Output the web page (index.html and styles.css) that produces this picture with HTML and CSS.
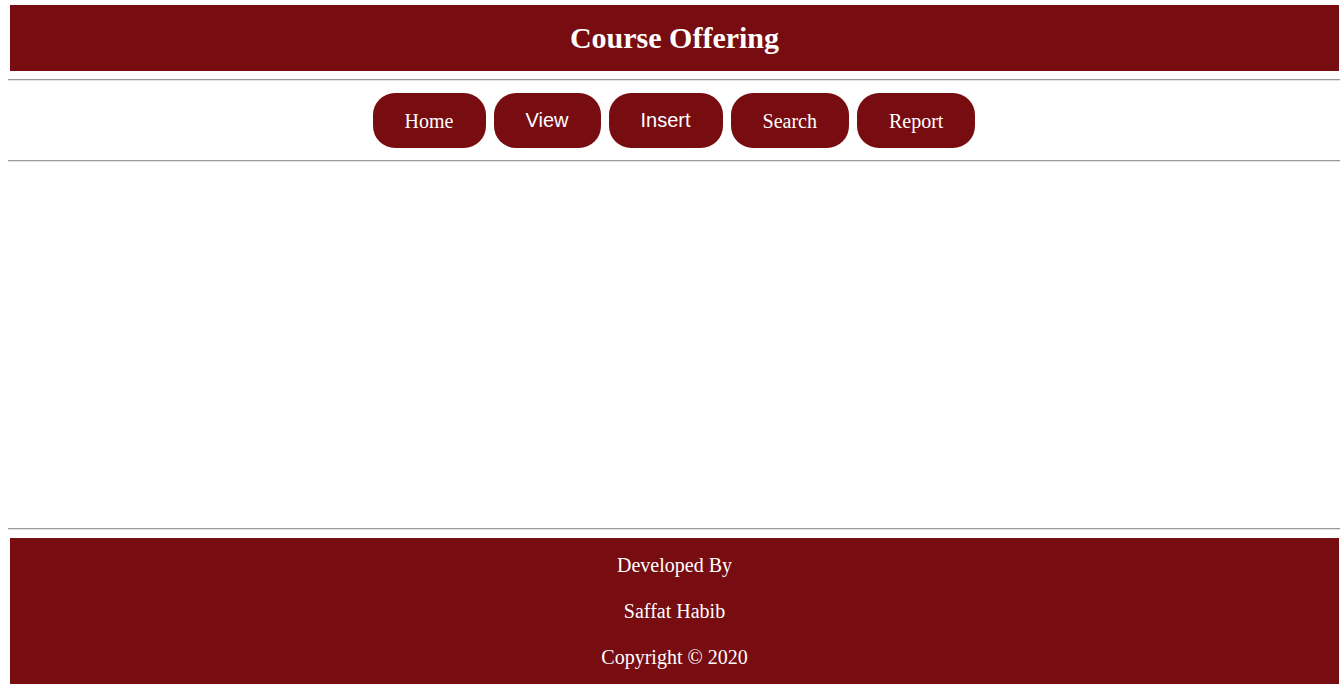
FILE: index.html
```html
<!DOCTYPE html>
<html lang="en">
<head>
<meta charset="utf-8">
<title>Course Offering</title>
<link rel="stylesheet" href="styles.css">
</head>
<body>
  <header class="header">
    <h1 class="title">Course Offering</h1>
  </header>
  <hr class="rule">
  <nav class="nav">
    <a class="btn serif" href="#">Home</a>
    <a class="btn sans" href="#">View</a>
    <a class="btn sans" href="#">Insert</a>
    <a class="btn serif" href="#">Search</a>
    <a class="btn serif" href="#">Report</a>
  </nav>
  <hr class="rule">
  <main class="content"></main>
  <hr class="rule">
  <footer class="footer">
    <p class="line">Developed By</p>
    <p class="line">Saffat Habib</p>
    <p class="line">Copyright &copy; 2020</p>
  </footer>
</body>
</html>
```
FILE: styles.css
```css
html, body {
  margin: 0;
  padding: 0;
  background: #ffffff;
  font-family: "Liberation Serif", "Times New Roman", serif;
}

.header {
  margin: 5px 1px 0 10px;
  height: 66px;
  background: #770c11;
  display: flex;
  align-items: center;
  justify-content: center;
}

.title {
  margin: 0;
  color: #ffffff;
  font-size: 30px;
  font-weight: bold;
  line-height: 1;
}

.rule {
  margin: 8px 0 0 8px;
  height: 0;
  border: 0;
  border-top: 1px solid #9a9a9a;
  border-bottom: 1px solid #e4e4e4;
}

.nav {
  margin-left: 8px;
  padding: 12px 0 12px;
  display: flex;
  justify-content: center;
  gap: 8px;
}

.nav + .rule {
  margin-top: 0;
}

.btn {
  height: 55px;
  display: flex;
  align-items: center;
  justify-content: center;
  background: #770c11;
  color: #ffffff;
  text-decoration: none;
  border-radius: 22px;
  box-sizing: border-box;
}

.serif {
  font-family: "Liberation Serif", "Times New Roman", serif;
  font-size: 20px;
  padding: 1px 32px 0;
}

.sans {
  font-family: "Liberation Sans", Arial, sans-serif;
  font-size: 20px;
  padding: 0 32px 0;
}

.content {
  height: 366px;
}

.content + .rule {
  margin-top: 0;
}

.footer {
  margin: 8px 1px 0 10px;
  background: #770c11;
  color: #ffffff;
  padding: 16px 0 40px;
  display: flex;
  flex-direction: column;
  align-items: center;
  gap: 23px;
}

.line {
  margin: 0;
  font-size: 20px;
  line-height: 23px;
}
```
